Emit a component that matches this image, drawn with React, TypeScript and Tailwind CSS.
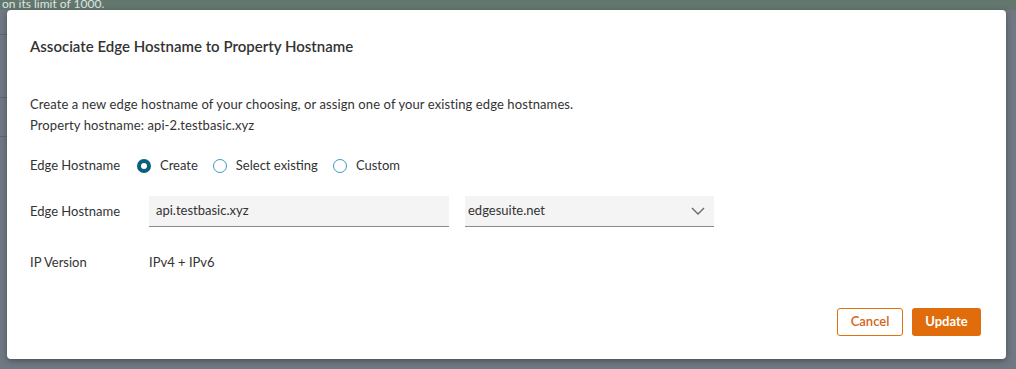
import React from "react";

const font = { fontFamily: "Lato, 'Noto Sans', sans-serif" };

function Radio({ label, checked }: { label: string; checked?: boolean }) {
  return (
    <label className="flex items-center gap-[9px]">
      {checked ? (
        <span className="h-[14px] w-[14px] rounded-full border-[4px] border-[#0b5e80] bg-white" />
      ) : (
        <span className="h-[14px] w-[14px] rounded-full border border-[#3f9ac2] bg-white" />
      )}
      <span>{label}</span>
    </label>
  );
}

export default function App() {
  return (
    <div
      className="relative h-[369px] w-[1016px] overflow-hidden bg-[#707983] text-[13px] text-[#333]"
      style={font}
    >
      {/* page behind the modal */}
      <div className="h-[10px] overflow-hidden bg-[#63776e] pl-[2px] text-[12px] leading-[8px] text-[#dfe6e2]">
        on its limit of 1000.
      </div>
      <div className="mt-[24px] h-px w-[7px] bg-[#5e666f]" />
      <div className="mt-[62px] h-px w-[7px] bg-[#5e666f]" />
      <div className="mt-[38px] h-px w-[7px] bg-[#5e666f]" />

      {/* modal */}
      <div className="absolute left-[7px] top-[10px] flex h-[349px] w-[999px] flex-col rounded-[4px] bg-white pb-[23px] pl-[23px] pr-[25px] pt-[26px] shadow-[0_2px_6px_rgba(0,0,0,0.35)]">
        <h2 className="text-[15px] font-semibold leading-[20px] text-[#333]">
          Associate Edge Hostname to Property Hostname
        </h2>

        <div className="mt-[38px] leading-[21px] tracking-[0.1px]">
          <p>Create a new edge hostname of your choosing, or assign one of your existing edge hostnames.</p>
          <p>Property hostname: api-2.testbasic.xyz</p>
        </div>

        <div className="mt-[20px] flex h-[20px] items-center">
          <div className="w-[107px] shrink-0">Edge Hostname</div>
          <div className="flex items-center gap-[15px]">
            <Radio label="Create" checked />
            <Radio label="Select existing" />
            <Radio label="Custom" />
          </div>
        </div>

        <div className="mt-[20px] flex items-center">
          <div className="w-[119px] shrink-0">Edge Hostname</div>
          <div className="flex h-[31px] w-[300px] shrink-0 items-center border-b border-[#8a8a8a] bg-[#f4f4f4] px-[7px]">
            api.testbasic.xyz
          </div>
          <div className="ml-[16px] flex h-[31px] w-[249px] shrink-0 items-center justify-between border-b border-[#8a8a8a] bg-[#f4f4f4] pl-[3px] pr-[9px]">
            <span>edgesuite.net</span>
            <svg width="14" height="8" viewBox="0 0 14 8" fill="none">
              <path d="M1 1l6 6 6-6" stroke="#666" strokeWidth="1.3" />
            </svg>
          </div>
        </div>

        <div className="mt-[26px] flex h-[20px] items-center">
          <div className="w-[119px] shrink-0">IP Version</div>
          <div>IPv4 + IPv6</div>
        </div>

        <div className="mt-auto flex justify-end gap-[9px]">
          <button className="h-[28px] w-[66px] rounded-[3px] border border-[#e0720f] bg-white font-semibold text-[#d0651a]">
            Cancel
          </button>
          <button className="h-[28px] w-[69px] rounded-[3px] bg-[#e06c0b] font-bold text-white">
            Update
          </button>
        </div>
      </div>
    </div>
  );
}
